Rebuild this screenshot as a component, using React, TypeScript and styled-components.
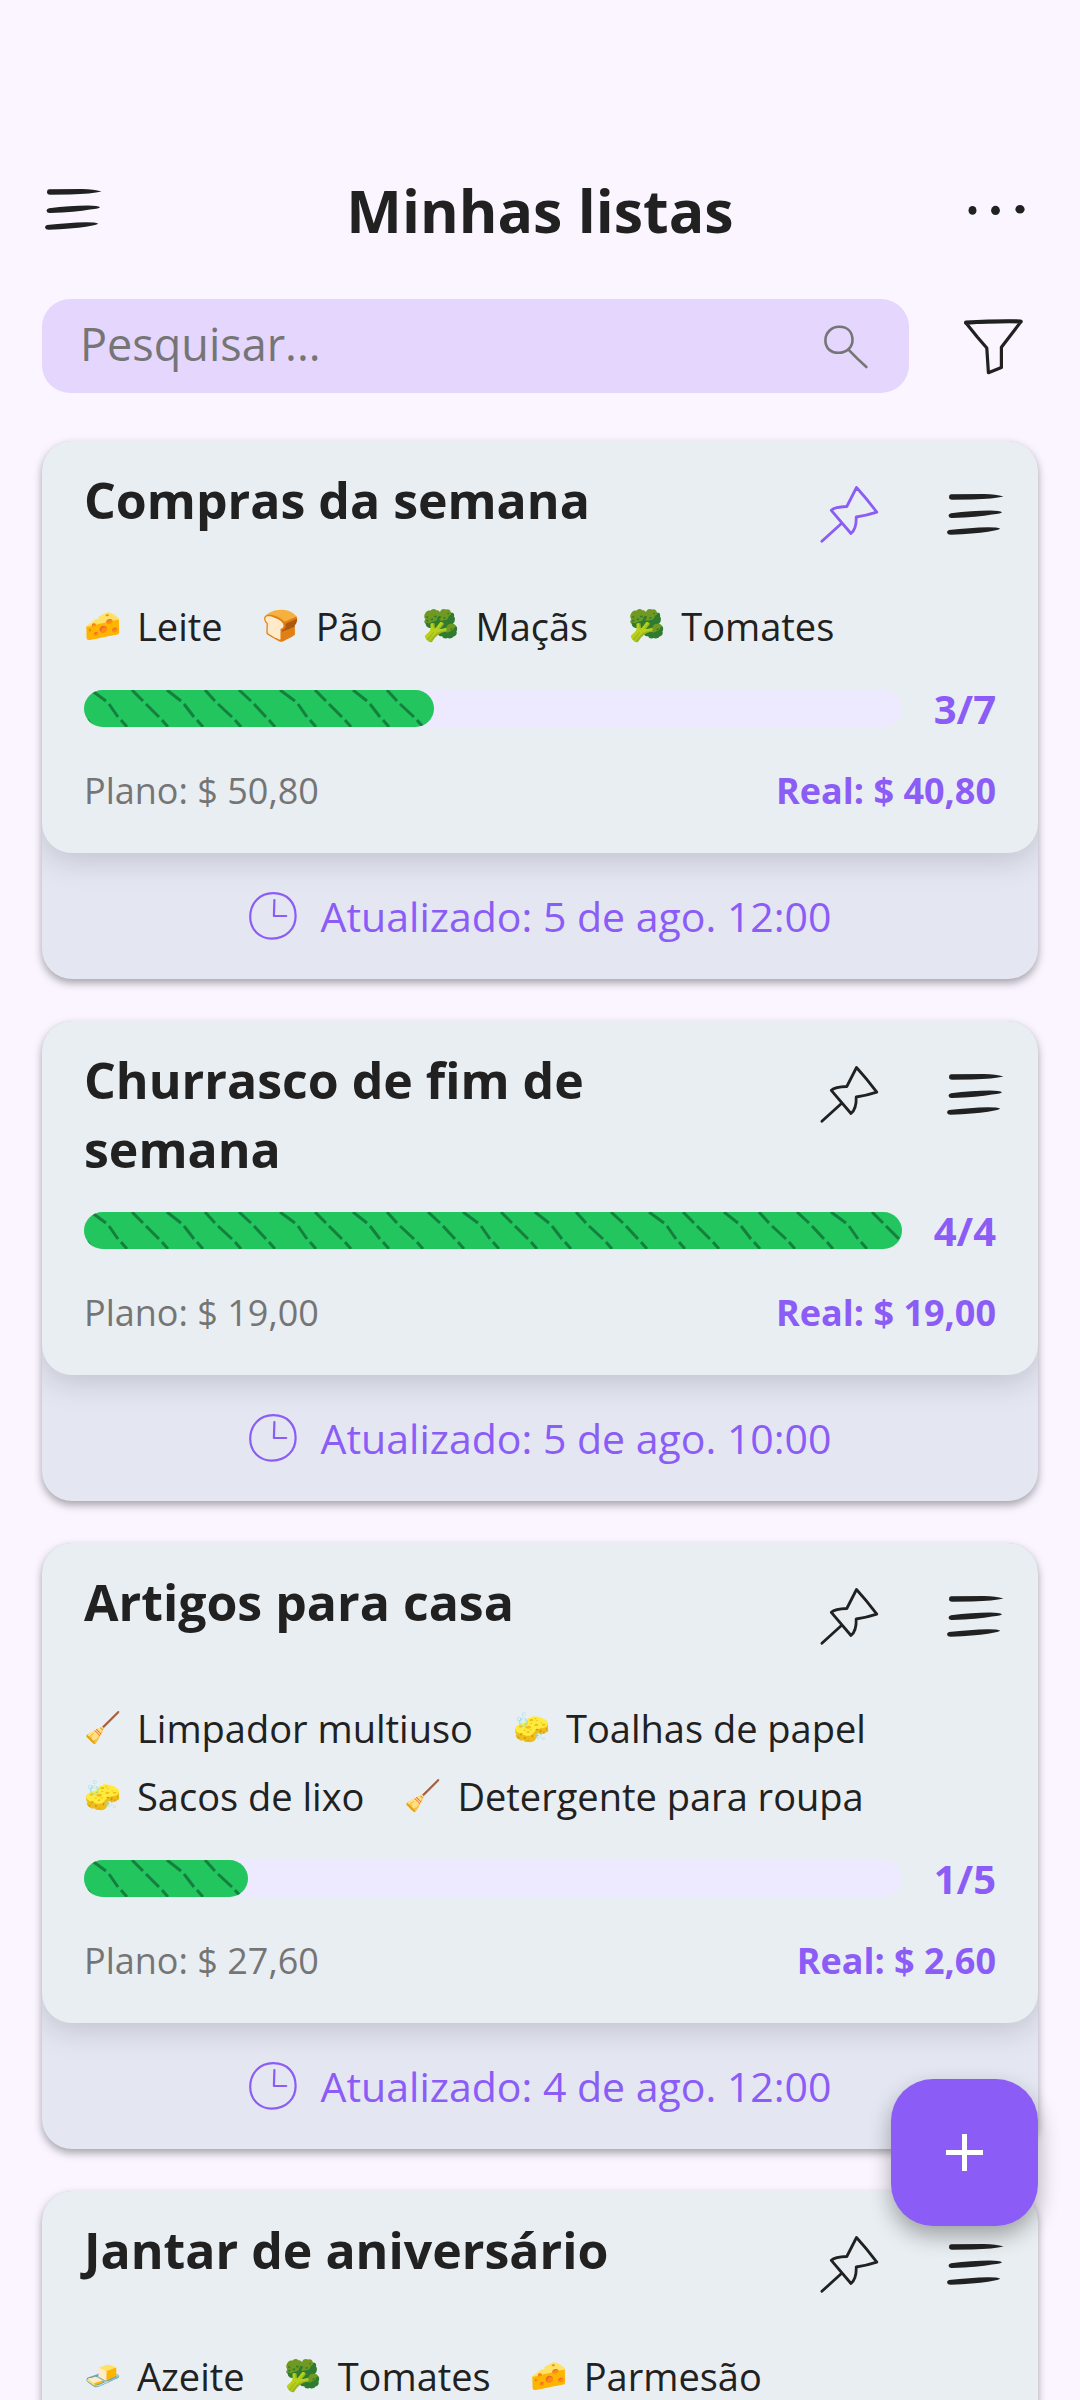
import React, { useState } from 'react';
import styled, { createGlobalStyle } from 'styled-components';

const theme = {
  background: '#faf5ff',
  card: '#e9eef2',
  footer: '#e4e6f2',
  field: '#e4d6fd',
  track: '#ede9fe',
  primary: '#8b5cf6',
  text: '#212121',
  muted: '#757575',
  green: '#22c55e',
  greenDark: '#15803d',
  radius: '30px',
};

const GlobalStyle = createGlobalStyle`
  * {
    box-sizing: border-box;
  }

  body {
    margin: 0;
    background: ${theme.background};
    color: ${theme.text};
    font-family: 'Open Sans', 'Noto Sans', sans-serif;
    font-variant-ligatures: none;
  }

  button {
    padding: 0;
    border: none;
    background: none;
    color: inherit;
    font: inherit;
    cursor: pointer;
  }
`;

const Screen = styled.div`
  display: flex;
  flex-direction: column;
  height: 100vh;
  padding-top: 163px;
`;

const TopBar = styled.header`
  display: grid;
  grid-template-columns: 1fr auto 1fr;
  align-items: center;
  height: 94px;
  padding: 0 42px;
`;

const PageTitle = styled.h1`
  margin: 0;
  font-size: 59px;
  line-height: 94px;
  font-weight: 700;
`;

const IconButton = styled.button<{ $width: number; $end?: boolean }>`
  display: flex;
  flex: none;
  align-items: center;
  justify-content: center;
  justify-self: ${({ $end }) => ($end ? 'end' : 'start')};
  width: ${({ $width }) => $width}px;
  height: 94px;
`;

const Icon = styled.svg`
  display: block;
  flex: none;
  width: 63px;
  height: 63px;
  fill: none;
  stroke: currentColor;
  stroke-width: 3;
  stroke-linecap: round;
  stroke-linejoin: round;
`;

const SearchRow = styled.div`
  display: flex;
  gap: 42px;
  padding: 42px 42px 0;
`;

const SearchBox = styled.label`
  display: flex;
  flex: 1;
  align-items: center;
  min-width: 0;
  height: 94px;
  padding: 0 32px 0 38px;
  border-radius: 28px;
  background: ${theme.field};
  color: ${theme.muted};
`;

const SearchInput = styled.input`
  flex: 1;
  min-width: 0;
  height: 94px;
  padding: 0 0 5px;
  border: none;
  outline: none;
  background: transparent;
  color: ${theme.text};
  font-family: inherit;
  font-size: 45px;

  &::placeholder {
    color: ${theme.muted};
    opacity: 1;
  }
`;

const Lists = styled.main`
  display: flex;
  flex: 1;
  flex-direction: column;
  gap: 42px;
  min-height: 0;
  padding: 48px 42px;
  overflow-y: auto;
  scrollbar-width: none;
`;

const Card = styled.article`
  flex: none;
  overflow: hidden;
  border-radius: ${theme.radius};
  background: ${theme.footer};
  box-shadow: 0 4px 8px rgba(0, 0, 0, 0.34);
`;

const CardBody = styled.div`
  padding: 0 42px 40px;
  border-radius: ${theme.radius};
  background: ${theme.card};
  box-shadow: 0 6px 32px rgba(0, 0, 0, 0.17);
`;

const CardHeader = styled.div`
  display: flex;
  min-height: 148px;
  margin-right: -42px;
`;

const CardTitle = styled.h2`
  flex: 1;
  margin: 0;
  padding: 25px 0 4px;
  font-size: 50px;
  line-height: 69px;
  font-weight: 700;
`;

const CardAction = styled.button<{ $active?: boolean }>`
  display: flex;
  flex: none;
  align-items: center;
  justify-content: center;
  width: 126px;
  height: 148px;
  color: ${({ $active }) => ($active ? theme.primary : theme.text)};
`;

const Items = styled.ul`
  display: flex;
  flex-wrap: wrap;
  column-gap: 40px;
  margin: 0;
  padding: 3px 0 6px;
  list-style: none;
`;

const Item = styled.li`
  display: flex;
  align-items: center;
  gap: 16px;
  font-size: 38px;
  line-height: 68px;
`;

const Emoji = styled.span`
  width: 37px;
  font-family: 'Noto Color Emoji', sans-serif;
  font-size: 30px;
`;

const ProgressRow = styled.div`
  display: flex;
  align-items: center;
  gap: 32px;
  height: 37px;
  margin-top: 24px;
`;

const Track = styled.div`
  flex: 1;
  min-width: 0;
  height: 37px;
  border-radius: 19px;
  background: ${theme.track};
`;

const Fill = styled.div`
  height: 100%;
  overflow: hidden;
  border-radius: 19px;
  background: ${theme.green};
`;

const Hatching = styled.svg`
  display: block;
  width: 900px;
  height: 37px;
  fill: none;
  stroke: ${theme.greenDark};
  stroke-width: 3;
`;

const Count = styled.span`
  color: ${theme.primary};
  font-size: 40px;
  line-height: 37px;
  font-weight: 700;
`;

const Prices = styled.div`
  display: flex;
  justify-content: space-between;
  margin-top: 42px;
  color: ${theme.muted};
  font-size: 36px;
  line-height: 44px;
`;

const RealPrice = styled.strong`
  color: ${theme.primary};
  font-weight: 700;
`;

const CardFooter = styled.footer`
  display: flex;
  align-items: center;
  justify-content: center;
  gap: 24px;
  height: 126px;
  color: ${theme.primary};
  font-size: 41px;
  font-weight: 500;
`;

const Clock = styled.svg`
  display: block;
  width: 48px;
  height: 48px;
  fill: none;
  stroke: currentColor;
  stroke-width: 2.2;
  stroke-linecap: round;
  stroke-linejoin: round;
`;

const AddButton = styled.button`
  position: fixed;
  right: 42px;
  bottom: 174px;
  display: flex;
  align-items: center;
  justify-content: center;
  width: 147px;
  height: 147px;
  border-radius: 42px;
  background: ${theme.primary};
  color: #fff;
  box-shadow: 0 10px 22px rgba(0, 0, 0, 0.32);
`;

const MenuIcon = () => (
  <Icon viewBox="0 1 63 63" aria-hidden="true">
    <g fill="currentColor" stroke="none">
      <path d="M7 11.3Q5 11.5 5 14Q5 16.7 8 16.7L28 16.5Q50 16 59.5 13.6Q52 11.2 40 11Z" />
      <path d="M7 30.2Q4.5 30.7 4.5 32.8Q5 35.3 8 35.1Q34 34 48 31.5Q58 30.5 58 29.3Q56 27.7 46 27.6Q28 28 7 30.2Z" />
      <path d="M5 46.9Q3 47.7 3 49.3Q3.5 51.9 7 51.8Q30 51 44 48.8Q56 47 56 45.6Q54 44.3 44 44.3Q26 44.8 5 46.9Z" />
    </g>
  </Icon>
);

const MoreIcon = () => (
  <Icon viewBox="0 0 63 63" aria-hidden="true">
    <g fill="currentColor" stroke="none">
      <ellipse cx="7.5" cy="31.4" rx="4" ry="4.4" />
      <ellipse cx="30.5" cy="31.4" rx="4.4" ry="4.6" />
      <ellipse cx="55" cy="30.2" rx="4.6" ry="4.3" />
    </g>
  </Icon>
);

const SearchIcon = () => (
  <Icon viewBox="0 0 63 63" aria-hidden="true">
    <path strokeWidth="2.6" d="M25.5 11.8C18 11.5 11.3 17.5 11.4 25.5C11.6 33.5 17 38 24.5 37.8C33 37.6 38.6 32 38.5 25C38.3 17 33.5 12 25.5 11.8Z" />
    <path strokeWidth="2.6" d="M34.7 34.8Q43 43.5 52.4 52" />
  </Icon>
);

const FilterIcon = () => (
  <Icon viewBox="0 0 63 63" aria-hidden="true">
    <path strokeWidth="3.2" d="M3 8Q30 6 58 6.6L38.4 32.3V52.6L25.4 57.7L23.8 33L14.3 22Z" />
    <path strokeWidth="4" d="M3 7.6Q30 6 57.6 6.4" />
  </Icon>
);

const PinIcon = () => (
  <Icon viewBox="0 0 63 63" aria-hidden="true">
    <path
      strokeWidth="2.8"
      d="M38.5 3.5Q49 15 58.8 28.2Q49 31.5 38.2 33Q38.6 45 33 49.5L13.3 26.3Q17 22.8 28.8 22.5ZM23.7 39.2L3.9 57.3"
    />
  </Icon>
);

const ClockIcon = () => (
  <Clock viewBox="0 0 48 48" aria-hidden="true">
    <path d="M24.5 1.2C11 1 1.2 11 1.2 25C1.4 38 11 46.8 23 46.6C37 46.4 46.8 37 46.6 23.5C46.4 10 38 1.4 24.5 1.2Z" />
    <path d="M25.4 8L24.9 24H37.2" />
  </Clock>
);

const PlusIcon = () => (
  <Icon viewBox="0 0 63 63" aria-hidden="true">
    <path strokeWidth="5" strokeLinecap="butt" d="M31.5 13V50M13 31.5H50" />
  </Icon>
);

// dashed pencil strokes, slightly uneven from one to the next
const hatch = Array.from({ length: 25 }, (_, i) => {
  const x = i * 37 - 28;
  const a = [0, 3, -1, 2, -2][i % 5];
  const b = [1, -2, 2, 0][i % 4];
  return `M${x + b} 0l${12 + a} 11m3 3l${12 - a} 13m3 3l6 7`;
}).join('');

interface ShoppingList {
  title: string;
  pinned?: boolean;
  items: [string, string][];
  done?: number;
  total?: number;
  plan?: string;
  real?: string;
  updated?: string;
}

const lists: ShoppingList[] = [
  {
    title: 'Compras da semana',
    pinned: true,
    items: [['🧀', 'Leite'], ['🍞', 'Pão'], ['🥦', 'Maçãs'], ['🥦', 'Tomates']],
    done: 3,
    total: 7,
    plan: '$ 50,80',
    real: '$ 40,80',
    updated: '5 de ago. 12:00',
  },
  {
    title: 'Churrasco de fim de semana',
    items: [],
    done: 4,
    total: 4,
    plan: '$ 19,00',
    real: '$ 19,00',
    updated: '5 de ago. 10:00',
  },
  {
    title: 'Artigos para casa',
    items: [
      ['🧹', 'Limpador multiuso'],
      ['🧽', 'Toalhas de papel'],
      ['🧽', 'Sacos de lixo'],
      ['🧹', 'Detergente para roupa'],
    ],
    done: 1,
    total: 5,
    plan: '$ 27,60',
    real: '$ 2,60',
    updated: '4 de ago. 12:00',
  },
  {
    title: 'Jantar de aniversário',
    items: [['🧈', 'Azeite'], ['🥦', 'Tomates'], ['🧀', 'Parmesão']],
  },
];

const ListCard: React.FC<{ list: ShoppingList }> = ({ list }) => {
  const [pinned, setPinned] = useState(!!list.pinned);

  return (
    <Card>
      <CardBody>
        <CardHeader>
          <CardTitle>{list.title}</CardTitle>
          <CardAction $active={pinned} aria-label="Fixar" aria-pressed={pinned} onClick={() => setPinned(!pinned)}>
            <PinIcon />
          </CardAction>
          <CardAction aria-label="Opções da lista">
            <MenuIcon />
          </CardAction>
        </CardHeader>
        {list.items.length > 0 && (
          <Items>
            {list.items.map(([emoji, name]) => (
              <Item key={name}>
                <Emoji>{emoji}</Emoji>
                {name}
              </Item>
            ))}
          </Items>
        )}
        {list.total && (
          <ProgressRow>
            <Track>
              <Fill style={{ width: `${((list.done || 0) / list.total) * 100}%` }}>
                <Hatching viewBox="0 0 900 37" aria-hidden="true">
                  <path d={hatch} />
                </Hatching>
              </Fill>
            </Track>
            <Count>{`${list.done}/${list.total}`}</Count>
          </ProgressRow>
        )}
        {list.plan && (
          <Prices>
            <span>{`Plano: ${list.plan}`}</span>
            <RealPrice>{`Real: ${list.real}`}</RealPrice>
          </Prices>
        )}
      </CardBody>
      {list.updated && (
        <CardFooter>
          <ClockIcon />
          <span>{`Atualizado: ${list.updated}`}</span>
        </CardFooter>
      )}
    </Card>
  );
};

const App: React.FC = () => {
  const [query, setQuery] = useState('');

  return (
    <>
      <GlobalStyle />
      <Screen>
        <TopBar>
          <IconButton $width={63} aria-label="Menu">
            <MenuIcon />
          </IconButton>
          <PageTitle>Minhas listas</PageTitle>
          <IconButton $width={84} $end aria-label="Mais opções">
            <MoreIcon />
          </IconButton>
        </TopBar>
        <SearchRow>
          <SearchBox>
            <SearchInput
              aria-label="Pesquisar"
              placeholder="Pesquisar..."
              value={query}
              onChange={(e) => setQuery(e.target.value)}
            />
            <SearchIcon />
          </SearchBox>
          <IconButton $width={87} aria-label="Filtrar">
            <FilterIcon />
          </IconButton>
        </SearchRow>
        <Lists>
          {lists.map((list) => (
            <ListCard key={list.title} list={list} />
          ))}
        </Lists>
        <AddButton aria-label="Nova lista">
          <PlusIcon />
        </AddButton>
      </Screen>
    </>
  );
};

export default App;
